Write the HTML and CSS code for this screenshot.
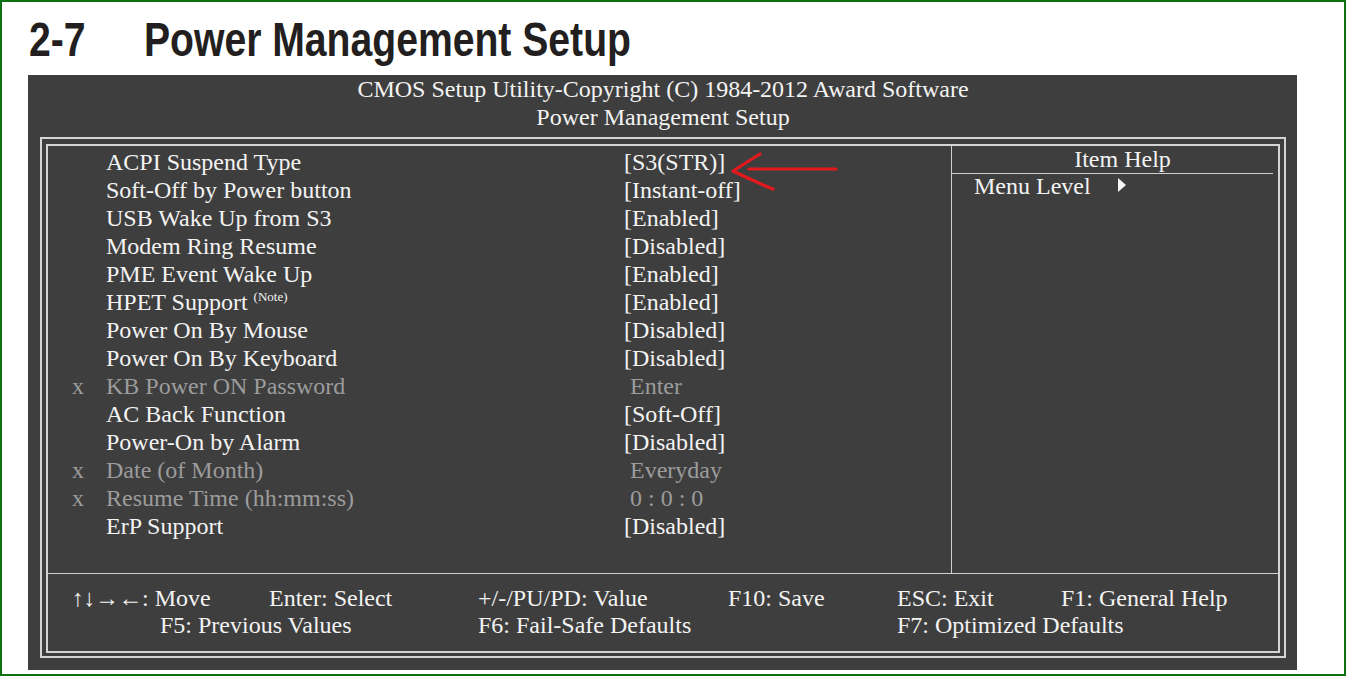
FILE: index.html
```html
<!DOCTYPE html>
<html>
<head>
<meta charset="utf-8">
<link rel="stylesheet" href="styles.css">
</head>
<body>
<div class="page">
  <h1 class="title"><span class="num">2-7</span><span class="name">Power Management Setup</span></h1>
  <div class="bios">
    <div class="head">
      <div>CMOS Setup Utility-Copyright (C) 1984-2012 Award Software</div>
      <div>Power Management Setup</div>
    </div>
    <div class="outer">
      <div class="inner">
        <div class="top">
          <div class="main">
            <div class="row"><span class="mark"></span><span class="label">ACPI Suspend Type</span><span class="val">[S3(STR)]</span></div>
            <div class="row"><span class="mark"></span><span class="label">Soft-Off by Power button</span><span class="val">[Instant-off]</span></div>
            <div class="row"><span class="mark"></span><span class="label">USB Wake Up from S3</span><span class="val">[Enabled]</span></div>
            <div class="row"><span class="mark"></span><span class="label">Modem Ring Resume</span><span class="val">[Disabled]</span></div>
            <div class="row"><span class="mark"></span><span class="label">PME Event Wake Up</span><span class="val">[Enabled]</span></div>
            <div class="row"><span class="mark"></span><span class="label">HPET Support <sup class="note">(Note)</sup></span><span class="val">[Enabled]</span></div>
            <div class="row"><span class="mark"></span><span class="label">Power On By Mouse</span><span class="val">[Disabled]</span></div>
            <div class="row"><span class="mark"></span><span class="label">Power On By Keyboard</span><span class="val">[Disabled]</span></div>
            <div class="row off"><span class="mark">x</span><span class="label">KB Power ON Password</span><span class="val plain">Enter</span></div>
            <div class="row"><span class="mark"></span><span class="label">AC Back Function</span><span class="val">[Soft-Off]</span></div>
            <div class="row"><span class="mark"></span><span class="label">Power-On by Alarm</span><span class="val">[Disabled]</span></div>
            <div class="row off"><span class="mark">x</span><span class="label">Date (of Month)</span><span class="val plain">Everyday</span></div>
            <div class="row off"><span class="mark">x</span><span class="label">Resume Time (hh:mm:ss)</span><span class="val plain">0 : 0 : 0</span></div>
            <div class="row"><span class="mark"></span><span class="label">ErP Support</span><span class="val">[Disabled]</span></div>
          </div>
          <div class="help">
            <div class="help-title">Item Help</div>
            <div class="help-body">Menu Level<span class="tri"></span></div>
          </div>
        </div>
        <div class="keys">
          <span class="c1"><span class="arr">↑↓→←</span>: Move</span>
          <span class="c3">Enter: Select</span>
          <span class="c4">+/-/PU/PD: Value</span>
          <span class="c5">F10: Save</span>
          <span class="c6">ESC: Exit</span>
          <span class="c7">F1: General Help</span>
          <span class="c2 r2">F5: Previous Values</span>
          <span class="c4 r2">F6: Fail-Safe Defaults</span>
          <span class="c6 r2">F7: Optimized Defaults</span>
        </div>
      </div>
    </div>
  </div>
  <svg class="arrow" width="120" height="50" viewBox="0 0 120 50">
    <path d="M24 21 L111 21" stroke="#e3191d" stroke-width="3.2" fill="none" stroke-linecap="round"/>
    <path d="M35 6 Q22 14 8 23 Q26 32 48 41" stroke="#e3191d" stroke-width="3.2" fill="none" stroke-linecap="round" stroke-linejoin="round"/>
  </svg>
</div>
</body>
</html>
```

FILE: styles.css
```css
html, body {
  margin: 0;
  padding: 0;
  background: #ffffff;
}

.page {
  position: relative;
  width: 1346px;
  height: 676px;
  box-sizing: border-box;
  border: 2px solid #0e7212;
  background: #ffffff;
  overflow: hidden;
}

.title {
  display: flex;
  margin: 14px 0 11px 27px;
  height: 48px;
  font-family: "Liberation Sans", Arial, sans-serif;
  font-weight: bold;
  font-size: 48px;
  line-height: 48px;
  color: #231f20;
  white-space: nowrap;
}

.title .num,
.title .name {
  display: inline-block;
  transform: scaleX(0.815);
  transform-origin: left center;
}

.title .num {
  width: 115px;
  flex: none;
}

.bios {
  margin-left: 26px;
  width: 1269px;
  height: 595px;
  box-sizing: border-box;
  padding: 0 11px 12px 12px;
  background: #3e3e3e;
  font-family: "Liberation Serif", "Times New Roman", serif;
  font-size: 24px;
  line-height: 28px;
  color: #f3f3f3;
}

.head {
  text-align: center;
  margin-bottom: 6px;
}

.outer {
  border: 2px solid #d4d4d4;
  padding: 5px 4px 4px 4px;
  height: 521px;
  box-sizing: border-box;
}

.inner {
  border: 2px solid #d4d4d4;
  height: 509px;
  box-sizing: border-box;
  display: flex;
  flex-direction: column;
}

.top {
  display: flex;
  height: 427px;
  border-bottom: 1px solid #d0d0d0;
}

.main {
  width: 903px;
  border-right: 1px solid #d0d0d0;
  padding-top: 2px;
}

.row {
  display: grid;
  grid-template-columns: 34px 518px 1fr;
  padding-left: 24px;
  height: 28px;
}

.row.off {
  color: #9c9c9c;
}

.val.plain {
  padding-left: 6px;
}

.note {
  font-size: 13px;
  line-height: 0;
  vertical-align: 9px;
}

.help {
  flex: 1;
}

.help-title {
  height: 27px;
  line-height: 26px;
  text-align: center;
  padding-left: 20px;
  margin-right: 5px;
  border-bottom: 1px solid #d0d0d0;
}

.help-body {
  padding-left: 22px;
  line-height: 24px;
  display: flex;
  align-items: center;
}

.tri {
  display: inline-block;
  width: 0;
  height: 0;
  margin-left: 27px;
  margin-top: -2px;
  border-top: 7.5px solid transparent;
  border-bottom: 7.5px solid transparent;
  border-left: 8px solid #f6f6f6;
}

.keys {
  display: grid;
  grid-template-columns: 88px 109px 209px 250px 169px 164px 1fr;
  grid-template-rows: 27px 27px;
  line-height: 27px;
  padding: 11px 0 0 24px;
  white-space: nowrap;
}

.keys .arr {
  letter-spacing: -0.5px;
}

.keys > span { grid-row: 1; }
.keys > .r2 { grid-row: 2; }
.keys .c1 { grid-column: 1 / span 2; }
.keys .c2 { grid-column: 2 / span 2; }
.keys .c3 { grid-column: 3; }
.keys .c4 { grid-column: 4; }
.keys .c5 { grid-column: 5; }
.keys .c6 { grid-column: 6; }
.keys .c7 { grid-column: 7; }

.arrow {
  position: absolute;
  left: 723px;
  top: 146px;
}
```
